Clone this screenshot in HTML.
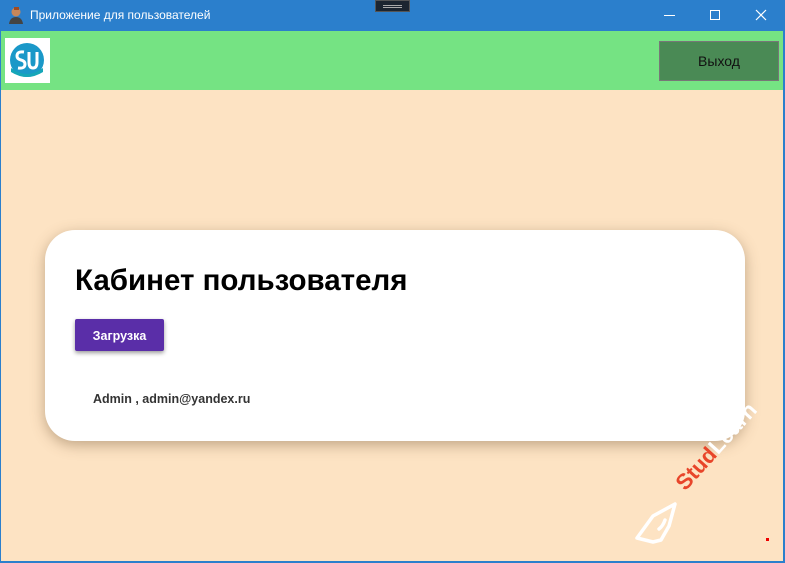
<!DOCTYPE html>
<html><head><meta charset="utf-8"><style>
*{margin:0;padding:0;box-sizing:border-box}
body{width:785px;height:563px;overflow:hidden;background:#2b7fcc;font-family:"Liberation Sans","DejaVu Sans",sans-serif;position:relative}
.title{position:absolute;left:0;top:0;width:785px;height:31px;background:#2b7fcc;color:#fff;font-size:12px}
.main{position:absolute;left:1px;top:31px;width:782px;height:530px;background:#fde3c3}
.hdr{position:absolute;left:0;top:0;width:782px;height:59px;background:#75e383}
.card{position:absolute;left:44px;top:199px;width:700px;height:211px;background:#fff;border-radius:30px;box-shadow:0 4px 14px rgba(120,90,60,.45)}
</style></head><body>
<div class="title">
 <svg style="position:absolute;left:8px;top:6px" width="16" height="18"><circle cx="8" cy="6" r="4.5" fill="#c8875a"/><rect x="6" y="1" width="5" height="3" fill="#a04a20"/><path d="M1 18 Q2 11 8 11 Q14 11 15 18Z" fill="#444"/></svg>
 <span style="position:absolute;left:30px;top:8px">Приложение для пользователей</span>
 <div style="position:absolute;left:375px;top:0;width:35px;height:12px;background:#1c2530;border:1px solid #555"><div style="margin:4px 7px 0;height:3px;border-top:1px solid #aaa;border-bottom:1px solid #aaa"></div></div>
 <div style="position:absolute;left:664px;top:15px;width:11px;height:1px;background:#fff"></div>
 <div style="position:absolute;left:710px;top:10px;width:10px;height:10px;border:1px solid #fff"></div>
 <svg style="position:absolute;left:755px;top:9px" width="12" height="12"><path d="M1 1L11 11M11 1L1 11" stroke="#fff" stroke-width="1.2"/></svg>
</div>
<div class="main">
 <div class="hdr">
  <div style="position:absolute;left:4px;top:7px;width:45px;height:45px;background:#fff">
   <svg width="45" height="45"><circle cx="22" cy="22" r="17" fill="#1a98c8"/><path d="M6 30 Q22 42 38 30 L38 34 Q22 44 6 34Z" fill="#15a6b8"/><path d="M19 14 Q12 13 12 18 Q12 21 16 22 Q20 23 20 26 Q20 31 13 30" stroke="#fff" stroke-width="3" fill="none"/><path d="M24 14 L24 24 Q24 30 28 30 Q32 30 32 24 L32 14" stroke="#fff" stroke-width="3" fill="none"/></svg>
  </div>
  <div style="position:absolute;left:658px;top:10px;width:120px;height:40px;background:#4a8a55;border:1px solid #777;color:#111;font-size:14px;text-align:center;line-height:38px">Выход</div>
 </div>
 <div class="card">
  <div style="position:absolute;left:30px;top:34px;font-size:29.5px;font-weight:bold;color:#000">Кабинет пользователя</div>
  <div style="position:absolute;left:30px;top:89px;width:89px;height:32px;background:#5a2ea8;border-radius:2px;box-shadow:0 2px 4px rgba(0,0,0,.4);color:#fff;font-size:12.5px;font-weight:bold;text-align:center;line-height:34px">Загрузка</div>
  <div style="position:absolute;left:48px;top:162px;font-size:12.5px;font-weight:bold;color:#333">Admin , admin@yandex.ru</div>
 </div>
 <div style="position:absolute;left:688px;top:440px;height:24px;line-height:24px;transform:rotate(-48deg);transform-origin:left bottom;font-size:22px;font-weight:bold;white-space:nowrap;z-index:5"><span style="color:#e8452a">Stud</span><span style="color:#fff">Learn</span></div>
 <svg style="position:absolute;left:630px;top:455px" width="60" height="60"><path d="M6 52 L22 30 L44 18 L38 40 M34 34 Q32 40 28 43 M38 40 L30 54 L22 56 L6 52" stroke="#fff" stroke-width="3.5" fill="none" stroke-linejoin="round" stroke-linecap="round"/></svg>
 <div style="position:absolute;left:765px;top:507px;width:3px;height:3px;background:#e00"></div>
</div>
</body></html>
